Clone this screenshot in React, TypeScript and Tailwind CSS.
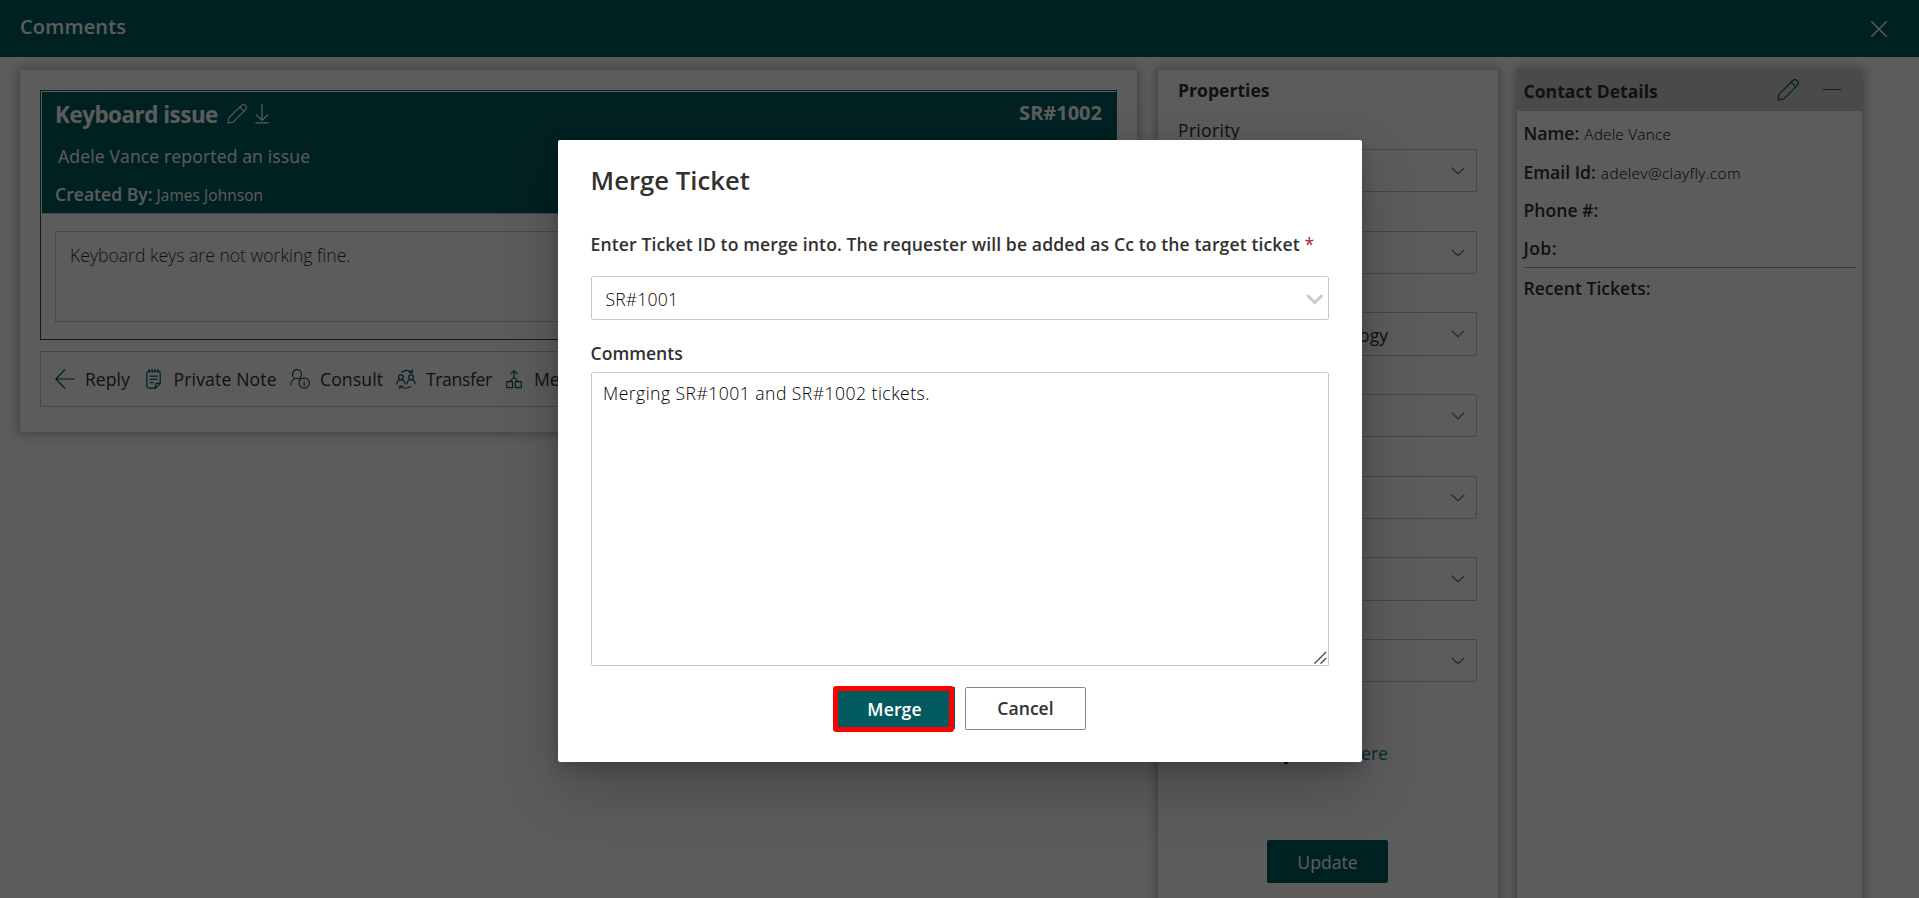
import type { ReactNode } from "react";

const stroke = {
  fill: "none",
  stroke: "currentColor",
  strokeLinecap: "round",
  strokeLinejoin: "round",
} as const;

function PencilIcon({ className }: { className: string }) {
  return (
    <svg viewBox="0 0 22 22" className={className} {...stroke} strokeWidth="1.2">
      <path d="M1 21l.9-5.6L15.7 1.7a3.25 3.25 0 0 1 4.6 4.6L6.6 20.1z" />
      <path d="M14.2 3.3l4.5 4.5" />
    </svg>
  );
}

function DownloadIcon() {
  return (
    <svg viewBox="0 0 14 20" className="h-5 w-3.5" {...stroke} strokeWidth="1.2">
      <path d="M7 .7v15.6M1.2 10.8L7 16.4l5.8-5.6M.7 18.8h12.6" />
    </svg>
  );
}

function ArrowLeftIcon() {
  return (
    <svg viewBox="0 0 20 20" className="h-5 w-5" {...stroke} strokeWidth="1.2">
      <path d="M9.6 1L.9 10l8.7 9M1 10h18.4" />
    </svg>
  );
}

function NoteIcon() {
  return (
    <svg viewBox="0 0 15 20" className="h-5 w-[15px]" {...stroke} strokeWidth="1.2">
      <path d="M9.5 19.2H3a2.2 2.2 0 0 1-2.2-2.2V4.2A2.2 2.2 0 0 1 3 2h9a2.2 2.2 0 0 1 2.2 2.2v10.2z" />
      <path d="M14.2 14.4H11a1.5 1.500 0 0 0-1.5 1.500v3.300" />
      <path d="M3.2.7v2.600M6.100.7v2.600M9 .7v2.600M11.900.7v2.600M4 7.200h7M4 10.400h7M4 13.600h3.200" />
    </svg>
  );
}

function ConsultIcon() {
  return (
    <svg viewBox="0 0 20 20" className="h-5 w-5" {...stroke} strokeWidth="1.2">
      <circle cx="7" cy="5.2" r="4.5" />
      <path d="M.8 15.800c.3-3.300 1.900-5.400 4.400-6.300M9 9.500l1.200.6" />
      <circle cx="14.200" cy="14" r="5.200" />
      <path d="M14.200 13.400v3.200M14.200 11.300v.1" />
    </svg>
  );
}

function TransferIcon() {
  return (
    <svg viewBox="0 0 20 20" className="h-5 w-5" {...stroke} strokeWidth="1.2">
      <circle cx="4.9" cy="8.2" r="2.4" />
      <circle cx="15.1" cy="8.2" r="2.4" />
      <path d="M.8 14.800c.2-2.500 1.600-4.200 4.100-4.200s3.900 1.700 4.100 4.200M11 14.800c.2-2.500 1.600-4.200 4.100-4.200s3.900 1.700 4.100 4.200" />
      <path d="M5.600 3.200c3-2.200 7.200-2.100 10-.2M16.300.6v3h-3M14.600 17.600c-3 2-7.200 1.900-10.200 0M3.800 20v-3h3" />
    </svg>
  );
}

function MergeIcon() {
  return (
    <svg viewBox="0 0 16 20" className="h-5 w-4" {...stroke} strokeWidth="1.2">
      <path d="M.7 12.600h5.900v6H.7zM9.400 12.600h5.900v6H9.400z" />
      <path d="M8 1.800v6.300M4.900 4.600L8 1.600l3.100 3M8 8.100l-4 4.200M8 8.100l4 4.200" />
    </svg>
  );
}

function ChevronIcon({ className, width }: { className: string; width: number }) {
  return (
    <svg viewBox="0 0 14 8" className={className} {...stroke} strokeWidth={width}>
      <path d="M1 1l6 5.800L13 1" />
    </svg>
  );
}

function ToolbarItem({ icon, slot, children }: { icon: ReactNode; slot: string; children: ReactNode }) {
  return (
    <div className={`flex shrink-0 items-center ${slot}`}>
      {icon}
      <span className="text-[#323130]">{children}</span>
    </div>
  );
}

function PropertySelect({ value, className }: { value?: string; className: string }) {
  return (
    <div className={`flex items-center justify-between rounded-[2px] border border-[#c8c6c4] pr-[11px] pl-3 ${className}`}>
      <span className="w-[196px] pt-px text-right">{value}</span>
      <ChevronIcon className="h-2 w-3.5 text-[#797775]" width={1.3} />
    </div>
  );
}

function TicketPanel() {
  return (
    <section className="h-[362px] w-[1117px] shrink-0 bg-white px-5 pt-5 shadow-[0_0_10px_2px_rgba(0,0,0,0.3)]">
      <div className="h-[250px] border border-[#025b5e] pl-px">
        <div className="h-[123px] border-y border-t-white border-b-[#c8c8c8] bg-[#025b5e] px-[13px] text-white">
          <div className="flex h-9 pt-[7px]">
            <h2 className="mt-[2px] text-[22.4px]/[28px] font-bold tracking-[-0.48px]">Keyboard issue</h2>
            <PencilIcon className="mt-[5px] ml-[9px] h-5 w-5" />
            <div className="mt-[5px] ml-2">
              <DownloadIcon />
            </div>
            <span className="mr-px ml-auto text-[20px]/[28px] font-bold">SR#1002</span>
          </div>
          <p className="mt-[16px] pl-[3px] tracking-[0.12px]">Adele Vance reported an issue</p>
          <p className="mt-[14px]">
            <b className="font-semibold">Created By:</b>
            <span className="ml-1 text-[15.4px] tracking-[0.1px]">James Johnson</span>
          </p>
        </div>
        <div className="mx-[13px] mt-[17px] h-[91px] border border-[#c8c8c8] px-3.5 pt-[11px] font-light text-[#323130]">
          Keyboard keys are not working fine.
        </div>
      </div>
      <div className="mt-[11px] flex h-14 items-center border border-[#c8c6c4] pl-3.5 text-[#025b5e]">
        <ToolbarItem slot="w-[91px] gap-[10px]" icon={<ArrowLeftIcon />}>Reply</ToolbarItem>
        <ToolbarItem slot="w-[144px] gap-[12.5px] tracking-[0.15px]" icon={<NoteIcon />}>Private Note</ToolbarItem>
        <ToolbarItem slot="w-[106px] gap-[10px] tracking-[0.1px]" icon={<ConsultIcon />}>Consult</ToolbarItem>
        <ToolbarItem slot="w-[110px] gap-[10px] tracking-[-0.39px]" icon={<TransferIcon />}>Transfer</ToolbarItem>
        <ToolbarItem slot="gap-[12px]" icon={<MergeIcon />}>Merge</ToolbarItem>
      </div>
    </section>
  );
}

function PropertiesPanel() {
  return (
    <section className="ml-[21px] h-[900px] w-[340px] shrink-0 bg-white px-[21px] text-[#323130] shadow-[0_0_10px_2px_rgba(0,0,0,0.3)]">
      <h3 className="-ml-px pt-2 font-bold">Properties</h3>
      <p className="mt-4 -ml-px tracking-[0.3px]">Priority</p>
      <PropertySelect className="mt-[7px] h-[43px]" />
      <PropertySelect className="mt-[39px] h-[43px]" />
      <PropertySelect className="mt-[38px] h-[44px]" value="Information Technology" />
      <PropertySelect className="mt-[38px] h-[43px]" />
      <PropertySelect className="mt-[39px] h-[43px]" />
      <PropertySelect className="mt-[38px] h-[44px]" />
      <PropertySelect className="mt-[38px] h-[43px]" />
      <p className="mt-[59px] flex justify-end gap-[57px] pr-[89px]">
        <span className="font-semibold text-black">history</span>
        <span className="text-[#038387]">here</span>
      </p>
      <button className="mt-[75px] ml-[88px] block h-[43px] w-[121px] rounded-[2px] bg-[#025b5e] text-white">Update</button>
    </section>
  );
}

function ContactField({ label, value, className }: { label: string; value?: ReactNode; className: string }) {
  return (
    <p className={`flex h-6 items-baseline ${className}`}>
      <span className="font-semibold">{label}</span>
      <span className="ml-[5px] text-[15.4px]/[24px] font-light text-black">{value}</span>
    </p>
  );
}

function ContactPanel() {
  return (
    <section className="ml-[19px] h-[900px] w-[345px] shrink-0 bg-white text-[#323130] shadow-[0_0_10px_2px_rgba(0,0,0,0.3)]">
      <div className="flex h-[41px] items-start bg-[#cdcdcd] pr-[21px] pl-[6.5px]">
        <h3 className="mt-[9px] font-bold">Contact Details</h3>
        <PencilIcon className="mt-[9px] ml-auto h-[22px] w-[22px] text-[#025b5e]" />
        <div className="mt-[19px] ml-[24px] h-px w-[18px] bg-[#025b5e]" />
      </div>
      <div className="pt-[10px] pr-[6px] pl-[6.5px]">
        <ContactField
          className=""
          label="Name:"
          value={<span className="tracking-[0.2px]">Adele Vance</span>}
        />
        <ContactField
          className="mt-[15px]"
          label="Email Id:"
          value={<span className="tracking-[0.38px]">adelev@clayfly.com</span>}
        />
        <ContactField className="mt-[14px]" label="Phone #:" />
        <ContactField className="mt-[14px] tracking-[0.4px]" label="Job:" />
        <hr className="mt-[7px] border-[#a19f9d]" />
        <p className="mt-[8px] font-semibold">Recent Tickets:</p>
      </div>
    </section>
  );
}

function MergeDialog() {
  return (
    <div className="h-[622px] w-[804px] rounded-[2px] bg-white px-[33px] pt-[25px] text-[#323130] shadow-[0_25.6px_57.6px_rgba(0,0,0,0.22),0_4.8px_14.4px_rgba(0,0,0,0.18)]">
      <h1 className="text-[25.6px]/[32px] font-semibold tracking-[0.05px]">Merge Ticket</h1>
      <p className="mt-[35px] font-semibold tracking-[0.105px]">
        Enter Ticket ID to merge into. The requester will be added as Cc to the target ticket{" "}
        <span className="font-normal text-[#a4262c]">*</span>
      </p>
      <div className="mt-5 flex h-11 items-center justify-between rounded-[2px] border border-[#c8c8c8] pr-[5px] pl-[14px]">
        <span className="pt-0.5 font-light tracking-[0.15px] text-black">SR#1001</span>
        <ChevronIcon className="mt-[2px] h-[9px] w-[15.5px] overflow-visible text-[#cccccc]" width={2.8} />
      </div>
      <p className="mt-[21px] font-semibold">Comments</p>
      <div className="mt-[7px] flex h-[294px] justify-between rounded-[2px] border border-[#c8c8c8] pt-2 pb-px pl-[11.5px]">
        <span className="font-light tracking-[0.45px] text-black">Merging SR#1001 and SR#1002 tickets.</span>
        <svg viewBox="0 0 13 13" className="mr-px h-[13px] w-[13px] self-end text-[#505050]" {...stroke} strokeWidth="1.4">
          <path d="M.8 12.200L11.800 1.200M7 12.200l4.800-4.800" />
        </svg>
      </div>
      <div className="mt-5 flex justify-center">
        <div className="h-[46px] w-[122px] bg-[linear-gradient(to_right,transparent_119px,#025b5e_119px)] bg-size-[122px_42px] bg-no-repeat bg-[position:0_1px]">
          <button className="block h-[46px] w-[121px] rounded-[3px] border-[5px] border-[#ff0000] bg-[#025b5e] pl-[2px] font-semibold tracking-[0.1px] text-white">
            Merge
          </button>
        </div>
        <button className="mt-px ml-[10px] h-[43px] w-[121px] rounded-[2px] border border-[#8a8886] bg-white pb-[2px] font-semibold">
          Cancel
        </button>
      </div>
    </div>
  );
}

export default function App() {
  return (
    <div className="relative h-[898px] w-[1919px] overflow-hidden bg-white font-['Open_Sans','Noto_Sans',sans-serif] text-[17.6px]/[24px]">
      <div className="flex h-full flex-col">
        <header className="flex h-[57px] shrink-0 items-center justify-between bg-[#025b5e] pr-8 pl-5 text-white">
          <h1 className="pb-[3px] text-[20px] font-semibold tracking-[0.15px]">Comments</h1>
          <svg viewBox="0 0 16 16" className="h-4 w-4" {...stroke} strokeWidth="1.4">
            <path d="M.8.8l14.400 14.400M15.200.8L.8 15.200" />
          </svg>
        </header>
        <main className="flex min-h-0 flex-1 items-start overflow-hidden pt-[13px] pl-5">
          <TicketPanel />
          <PropertiesPanel />
          <ContactPanel />
        </main>
      </div>
      <div className="absolute inset-0 flex items-start justify-center bg-black/64 pt-[140px]">
        <MergeDialog />
      </div>
    </div>
  );
}
